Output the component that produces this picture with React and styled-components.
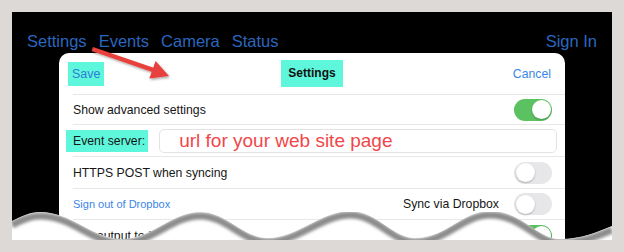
import React from 'react';
import styled, { createGlobalStyle } from 'styled-components';

const GlobalStyle = createGlobalStyle`
  html, body {
    margin: 0;
    padding: 0;
    background: #dcd9d7;
  }
  body {
    font-family: "Liberation Sans", Arial, sans-serif;
  }
`

const Page = styled.div`
  width: 624px;
  height: 252px;
  padding: 12px;
  box-sizing: border-box;
`

const Frame = styled.div`
  position: relative;
  width: 600px;
  height: 228px;
  background: #000;
  overflow: hidden;
`

const Nav = styled.nav`
  display: flex;
  align-items: center;
  gap: 12px;
  height: 20px;
  padding: 19px 15px 0;
  font-size: 16.5px;
  line-height: 20px;
  color: #2a66bf;
`

const NavSpacer = styled.div`
  flex: 1;
`

const Sheet = styled.div`
  margin: 2px 47px 0;
  height: 190px;
  background: #fff;
  border-radius: 10px 10px 0 0;
`

const Header = styled.div`
  display: grid;
  grid-template-columns: 1fr auto 1fr;
  align-items: center;
  height: 41px;
  margin-left: 14px;
  padding-right: 14px;
  border-bottom: 1px solid #e6e6e6;
`

const Marked = styled.span`
  display: inline-block;
  background: #5ff7dc;
  padding: ${p => p.$pad};
  margin-left: ${p => p.$shift || 0}px;
  line-height: ${p => p.$h}px;
`

const SaveBtn = styled(Marked)`
  justify-self: start;
  font-size: 12.5px;
  color: #2f7bd6;
`

const Title = styled(Marked)`
  font-size: 12px;
  font-weight: bold;
  color: #111;
`

const CancelBtn = styled.span`
  justify-self: end;
  font-size: 12.25px;
  color: #3a86e6;
`

const Row = styled.div`
  display: flex;
  align-items: center;
  height: ${p => p.$h}px;
  margin-left: 14px;
  padding-right: ${p => p.$pr ?? 13}px;
  border-bottom: 1px solid #e8e8e8;
  font-size: 12.25px;
  color: #161616;
`

const Spacer = styled.div`
  flex: 1;
`

const Link = styled.span`
  font-size: 11px;
  color: #3a86e6;
`

const SideLabel = styled.span`
  margin-right: 15px;
`

const UrlBox = styled.div`
  flex: 1;
  height: 22px;
  margin-left: 11px;
  padding-left: 19px;
  border: 1px solid #e3e3e3;
  border-radius: 5px;
  font-size: 19px;
  line-height: 22px;
  color: #f0474a;
`

const Toggle = styled.span`
  display: flex;
  flex: none;
  justify-content: ${p => (p.$on ? 'flex-end' : 'flex-start')};
  align-items: center;
  box-sizing: border-box;
  width: 38px;
  height: 22px;
  padding: 0 1.5px;
  border-radius: 11px;
  background: ${p => (p.$on ? '#5cc160' : '#e7e7e9')};
`

const Knob = styled.span`
  width: 19px;
  height: 19px;
  border-radius: 50%;
  background: #fff;
  box-shadow: 0 1px 2px rgba(0, 0, 0, 0.25);
`

const ArrowLayer = styled.svg`
  position: absolute;
  left: 70px;
  top: 28px;
`

const TornEdge = styled.svg`
  position: absolute;
  left: 0;
  bottom: 0;
  display: block;
`

const wave =
  'M0,17 C10,12 18,8 28,8 C60,8 80,35 110,35 C140,35 160,8 188,8 C215,8 230,34 256,34 ' +
  'C285,34 310,7 338,7 C365,7 380,34 403,34 C435,34 450,7 478,7 C510,7 525,35 548,35 C570,35 585,28 600,22'

const Switch = ({ on }) => (
  <Toggle $on={on}>
    <Knob />
  </Toggle>
)

const App = () => (
  <Page>
    <GlobalStyle />
    <Frame>
      <Nav>
        <span>Settings</span>
        <span>Events</span>
        <span>Camera</span>
        <span>Status</span>
        <NavSpacer />
        <span>Sign In</span>
      </Nav>

      <Sheet>
        <Header>
          <SaveBtn $pad="0 3px 0 4px" $shift={-5} $h={24}>Save</SaveBtn>
          <Title $pad="0 7px" $h={27}>Settings</Title>
          <CancelBtn>Cancel</CancelBtn>
        </Header>

        <Row $h={29}>
          <span>Show advanced settings</span>
          <Spacer />
          <Switch on />
        </Row>

        <Row $h={31} $pr={8}>
          <Marked $pad="0 3px 0 7px" $shift={-7} $h={22}>Event server:</Marked>
          <UrlBox>url for your web site page</UrlBox>
        </Row>

        <Row $h={31}>
          <span>HTTPS POST when syncing</span>
          <Spacer />
          <Switch />
        </Row>

        <Row $h={30}>
          <Link>Sign out of Dropbox</Link>
          <Spacer />
          <SideLabel>Sync via Dropbox</SideLabel>
          <Switch />
        </Row>

        <Row $h={31}>
          <span>Log output to file</span>
          <Spacer />
          <Switch on />
        </Row>
      </Sheet>

      <ArrowLayer width="110" height="50" viewBox="0 0 110 50">
        <defs>
          <filter id="arrowShadow" x="-20%" y="-20%" width="140%" height="140%">
            <feDropShadow dx="1" dy="1.5" stdDeviation="1" floodColor="#000" floodOpacity="0.35" />
          </filter>
        </defs>
        <g filter="url(#arrowShadow)" fill="#e8413d">
          <path d="M11,7 L73,28.3 L71.6,32.4 L9.6,11 Z" />
          <path d="M87,36 L67.3,38.6 L73.6,21 Z" />
        </g>
      </ArrowLayer>

      <TornEdge width="600" height="36" viewBox="0 0 600 36">
        <defs>
          <clipPath id="belowWave">
            <path d={wave + ' L600,36 L0,36 Z'} />
          </clipPath>
          <filter id="softEdge">
            <feGaussianBlur stdDeviation="1.6" />
          </filter>
        </defs>
        <path d={wave + ' L600,36 L0,36 Z'} fill="#fff" />
        <g clipPath="url(#belowWave)">
          <path d={wave} transform="translate(0,4)" stroke="#8c8c8c" strokeWidth="7" fill="none" filter="url(#softEdge)" />
        </g>
      </TornEdge>
    </Frame>
  </Page>
)

export default App;
